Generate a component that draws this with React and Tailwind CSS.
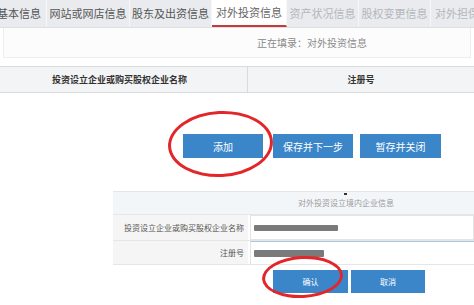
import React from "react";

const tabs = [
  { label: "基本信息", w: "w-[55px]", ml: "ml-[-8px]" },
  { label: "网站或网店信息", w: "w-[83px]" },
  { label: "股东及出资信息", w: "w-[82px]" },
  { label: "对外投资信息", w: "w-[75px]", active: true },
  { label: "资产状况信息", w: "w-[72px]", dim: true },
  { label: "股权变更信息", w: "w-[72px]", dim: true },
  { label: "对外担保信息", w: "w-[75px]", dim: true },
];

const App = () => {
  return (
    <div className="relative w-[474px] h-[305px] overflow-hidden bg-white font-['Noto_Sans_CJK_SC','Noto_Sans',sans-serif]">
      {/* Tab bar */}
      <div className="flex h-[28px] bg-[#e9ebee] border-b border-[#dcdfe3]">
        {tabs.map((t, i) => (
          <div
            key={i}
            className={`${t.w} ${t.ml || ""} shrink-0 flex items-center justify-center text-[11px] border-r border-[#f6f7f8] ${
              t.active
                ? "bg-white text-[#666] border-b-2 border-b-[#c83a3a]"
                : t.dim
                ? "text-[#b4b7bc]"
                : "text-[#555]"
            }`}
          >
            <span className="whitespace-nowrap">{t.label}</span>
          </div>
        ))}
      </div>

      {/* Status */}
      <div className="h-[30px] mx-[3px] bg-[#fcfcfc] border-x border-b border-[#eceef0] flex items-center pl-[253px] text-[10px] text-[#8a8a8a]">
        正在填录：对外投资信息
      </div>

      {/* Table header */}
      <div className="mt-[8px] h-[27px] flex bg-[#f3f4f5] border-y border-[#d9dadc] text-[9px] font-bold text-[#333]">
        <div className="w-[248px] flex items-center justify-center border-r border-[#d9dadc] pr-[8px]">
          投资设立企业或购买股权企业名称
        </div>
        <div className="flex-1 flex items-center justify-center">注册号</div>
      </div>

      {/* Action buttons */}
      <div className="mt-[41px] flex pl-[183px] text-[10px] text-white">
        <div className="w-[80px] h-[24px] bg-[#3b86c9] flex items-center justify-center">添加</div>
        <div className="ml-[10px] w-[80px] h-[24px] bg-[#3b86c9] flex items-center justify-center">保存并下一步</div>
        <div className="ml-[7px] w-[81px] h-[24px] bg-[#3b86c9] flex items-center justify-center">暂存并关闭</div>
      </div>

      {/* Inline form */}
      <div className="mt-[33px] ml-[113px] border-t border-[#e3e5e8]">
        <div className="relative h-[22px] bg-[#f3f6f9] flex items-center justify-center pl-[105px] text-[8px] text-[#999]">
          <span className="absolute left-[231px] top-[1px] w-[3px] h-[2px] bg-[#333]" />
          对外投资设立境内企业信息
        </div>
        <div className="flex h-[26px] border-t border-[#e6e6e6]">
          <div className="w-[135px] bg-[#f5f5f5] flex items-center justify-end pr-[4px] text-[8px] text-[#555] whitespace-nowrap">
            投资设立企业或购买股权企业名称
          </div>
          <div className="flex-1 ml-[2px] bg-white border border-[#e4e4e4] flex items-center pl-[3px]">
            <div className="w-[84px] h-[6px] bg-[#7a7a7a] rounded-[1px]" />
          </div>
        </div>
        <div className="flex h-[25px] border-y border-[#e6e6e6]">
          <div className="w-[135px] bg-[#f5f5f5] flex items-center justify-end pr-[4px] text-[8px] text-[#555]">
            注册号
          </div>
          <div className="flex-1 ml-[2px] bg-white border-t border-t-[#a9c8e2] border-l border-[#e4e4e4] flex items-center pl-[3px]">
            <div className="w-[70px] h-[7px] bg-[#7a7a7a] rounded-[1px]" />
          </div>
        </div>
      </div>

      {/* Confirm buttons */}
      <div className="mt-[5px] flex pl-[273px] text-[8px] text-white">
        <div className="w-[75px] h-[23px] bg-[#3b86c9] flex items-center justify-center">确认</div>
        <div className="ml-[3px] w-[74px] h-[23px] bg-[#3b86c9] flex items-center justify-center">取消</div>
      </div>

      {/* Red annotation ellipses */}
      <div className="absolute left-[168px] top-[111px] w-[105px] h-[66px] rounded-[50%] border-[3px] border-[#e3262a] -rotate-3" />
      <div className="absolute left-[262px] top-[256px] w-[81px] h-[42px] rounded-[50%] border-[3px] border-[#e3262a] -rotate-3" />
    </div>
  );
};

export default App;
